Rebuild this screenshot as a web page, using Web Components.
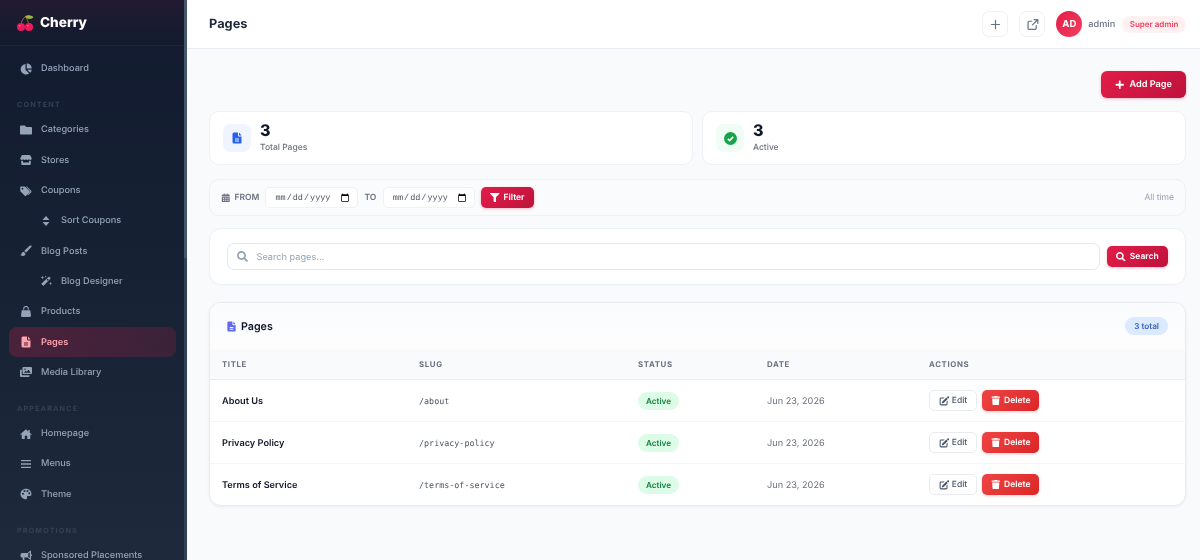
<!DOCTYPE html>
<html lang="en">
<head>
<meta charset="utf-8">
<title>Pages</title>
<style>
  html, body { margin: 0; height: 560px; overflow: hidden; background: #f8fafc; }
  body { font-family: Inter, "Liberation Sans", sans-serif; color: #0f172a; text-rendering: geometricPrecision; }
  app-shell { height: 560px; will-change: transform; }
</style>
</head>
<body>
<app-shell>
  <side-bar slot="side">
    <nav-item icon="pie">Dashboard</nav-item>
    <nav-label>CONTENT</nav-label>
    <nav-item icon="folder">Categories</nav-item>
    <nav-item icon="store">Stores</nav-item>
    <nav-item icon="tags">Coupons</nav-item>
    <nav-item icon="sort" sub>Sort Coupons</nav-item>
    <nav-item icon="brush">Blog Posts</nav-item>
    <nav-item icon="wand" sub>Blog Designer</nav-item>
    <nav-item icon="bag">Products</nav-item>
    <nav-item icon="file" active>Pages</nav-item>
    <nav-item icon="images">Media Library</nav-item>
    <nav-label>APPEARANCE</nav-label>
    <nav-item icon="home">Homepage</nav-item>
    <nav-item icon="bars">Menus</nav-item>
    <nav-item icon="palette">Theme</nav-item>
    <nav-label>PROMOTIONS</nav-label>
    <nav-item icon="bullhorn">Sponsored Placements</nav-item>
  </side-bar>
  <top-bar heading="Pages"></top-bar>
  <page-content>
    <div class="actions"><red-button icon="plus" size="lg">Add Page</red-button></div>
    <div class="stats">
      <stat-card icon="file" tone="blue" value="3">Total Pages</stat-card>
      <stat-card icon="check" tone="green" value="3">Active</stat-card>
    </div>
    <filter-bar></filter-bar>
    <search-card></search-card>
    <pages-table></pages-table>
  </page-content>
</app-shell>

<script>
const ICONS = {
  plus: ['0 0 448 512', 'M416 208H272V64c0-17.67-14.33-32-32-32h-32c-17.67 0-32 14.33-32 32v144H32c-17.67 0-32 14.33-32 32v32c0 17.67 14.33 32 32 32h144v144c0 17.67 14.33 32 32 32h32c17.67 0 32-14.33 32-32V304h144c17.67 0 32-14.33 32-32v-32c0-17.67-14.33-32-32-32z'],
  search: ['0 0 512 512', 'M505 442.7L405.3 343c-4.5-4.5-10.6-7-17-7H372c27.6-35.3 44-79.7 44-128C416 93.1 322.9 0 208 0S0 93.1 0 208s93.1 208 208 208c48.3 0 92.7-16.4 128-44v16.3c0 6.4 2.5 12.5 7 17l99.7 99.7c9.4 9.4 24.6 9.4 33.9 0l28.3-28.3c9.4-9.4 9.4-24.6.1-34zM208 336c-70.7 0-128-57.2-128-128 0-70.7 57.2-128 128-128 70.7 0 128 57.2 128 128 0 70.7-57.2 128-128 128z'],
  filter: ['0 0 512 512', 'M487.976 0H24.028C2.71 0-8.047 25.866 7.058 40.971L192 225.941V432c0 7.831 3.821 15.17 10.237 19.662l80 55.98C298.02 518.69 320 507.493 320 487.98V225.941l184.947-184.97C520.021 25.896 509.338 0 487.976 0z'],
  folder: ['0 0 512 512', 'M464 128H272l-64-64H48C21.49 64 0 85.49 0 112v288c0 26.51 21.49 48 48 48h416c26.51 0 48-21.49 48-48V176c0-26.51-21.49-48-48-48z'],
  trash: ['0 0 448 512', 'M432 32H312l-9.4-18.7A24 24 0 0 0 281.1 0H166.8a23.72 23.72 0 0 0-21.4 13.3L136 32H16A16 16 0 0 0 0 48v32a16 16 0 0 0 16 16h416a16 16 0 0 0 16-16V48a16 16 0 0 0-16-16zM53.2 467a48 48 0 0 0 47.9 45h245.8a48 48 0 0 0 47.9-45L416 128H32z'],
  file: ['0 0 24 24', 'M6 1h8v6a2 2 0 0 0 2 2h5v12a2 2 0 0 1-2 2H6a3 3 0 0 1-3-3V4a3 3 0 0 1 3-3zM16 1l5 6h-5zM8 13v2h8v-2zM8 17v2h8v-2z'],
  pie: ['0 0 24 24', 'M11 2v11.500l7.300 7.300A10.500 10.500 0 1 1 11 2zM13.500 .5A10.500 10.500 0 0 1 23.500 11h-10zM14.500 13.500H23.500a10.500 10.500 0 0 1-3.200 6z'],
  store: ['0 0 24 24', 'M4 2h16l3.500 6.500a3.300 3.300 0 0 1-3.300 3.500 3.300 3.300 0 0 1-2.700-1.500A3.200 3.200 0 0 1 14.700 12a3.200 3.200 0 0 1-2.700-1.500A3.200 3.200 0 0 1 9.300 12a3.200 3.200 0 0 1-2.800-1.500A3.300 3.300 0 0 1 3.800 12 3.300 3.300 0 0 1 .5 8.500zM2.500 13.500h3.500V17h12v-3.500h3.500V20a2 2 0 0 1-2 2H4.500a2 2 0 0 1-2-2z'],
  tags: ['0 0 24 24', 'M.5 4v7.500c0 .6.200 1.100.600 1.500l8.400 8.400c.8.800 2 .8 2.800 0l6.600-6.600c.8-.8.800-2 0-2.800L10.500 3.600A2 2 0 0 0 9 3H1.500a1 1 0 0 0-1 1zM5 9a1.700 1.700 0 1 1 0-3.400A1.700 1.700 0 0 1 5 9zM13.500 3l9 8.500c.8.800.8 2 0 2.800l-6 6-1-1 5.500-6.300-9.200-10z'],
  sort: ['0 0 24 24', 'M12 2l7 8H5zM12 22l-7-8h14z'],
  brush: ['0 0 24 24', 'M22.500 1.200c-1-.8-2.200-.3-3.200.5L9.500 10.500c-.5.500-.8 1-1 1.600l3.300 3c.6-.2 1.200-.6 1.600-1.100l9.200-9.800c.7-.9.800-2.200-.1-3zM7.300 13.500c-2.500.2-4 1.900-4.300 4-.2 1.400-1 2-2 2.300 1.300 1.700 3.500 2.400 5.500 2.200 3-.3 4.600-2.300 4.500-5z'],
  wand: ['0 0 24 24', 'M18 3l3.500 3.500L7 22l-4.500-4.500zM15.500 7.500l-2.200 2.200 2 2 2.200-2.200zM5 1.500l1 2.500 2.500 1L6 6 5 8.500 4 6 1.500 5 4 4zM21 14l.9 2.100 2.100.9-2.100.9L21 20l-.9-2.100L18 17l2.100-.9zM11.500 1l.7 1.300 1.300.7-1.300.7-.7 1.300-.7-1.300L9.500 3l1.300-.7z'],
  bag: ['0 0 24 24', 'M8.500 7.500V5.500a3.500 3.500 0 0 1 7 0v2h2.200v-2a5.700 5.700 0 0 0-11.400 0v2zM3.500 8.500h17l1.500 10.500a3 3 0 0 1-3 3H5a3 3 0 0 1-3-3z'],
  images: ['0 0 24 24', 'M7 2h15a2 2 0 0 1 2 2v10a2 2 0 0 1-2 2H7a2 2 0 0 1-2-2V4a2 2 0 0 1 2-2zM7.500 13.500h14l-4.500-6-3.500 4-2-2zM10 5a1.500 1.500 0 1 0 0 3 1.500 1.500 0 0 0 0-3zM3.500 7v9.500A2 2 0 0 0 5.500 18.500H19V20a2 2 0 0 1-2 2H2a2 2 0 0 1-2-2V9a2 2 0 0 1 2-2z'],
  home: ['0 0 24 24', 'M12 2.500 .5 12.500l1.300 1.500L3.500 12.600V21a1 1 0 0 0 1 1h5v-6.500h5V22h5a1 1 0 0 0 1-1v-8.400l1.700 1.400 1.300-1.500L19.500 9.500V4h-3v3z'],
  bars: ['0 0 24 24', 'M2 4h20v2.600H2zM2 10.700h20v2.600H2zM2 17.400h20V20H2z'],
  palette: ['0 0 24 24', 'M12 1.500C5.800 1.500 1 6.300 1 12s5 10.500 10.500 10.500c2.500 0 3.300-1.700 2.600-3.300-.8-1.800.2-3.200 2-3.200h3.400c2.200 0 3.500-1.700 3.500-4C23 6 18 1.500 12 1.500zM6 13.500a2 2 0 1 1 0-4 2 2 0 0 1 0 4zM9 8a2 2 0 1 1 0-4 2 2 0 0 1 0 4zM15 8a2 2 0 1 1 0-4 2 2 0 0 1 0 4zM18.500 12.500a2 2 0 1 1 0-4 2 2 0 0 1 0 4z'],
  bullhorn: ['0 0 24 24', 'M22 2a1 1 0 0 0-1.500-.5L15 6H4a3 3 0 0 0-3 3v3a3 3 0 0 0 3 3h1l1 7h3.500L8.500 15H15l5.500 4.500A1 1 0 0 0 22 19v-6.500a2 2 0 0 0 0-4zM19.500 4.700v11.600L16.500 14V7z'],
  calendar: ['0 0 24 24', 'M7 1h2.500v3h5V1H17v3h3a2 2 0 0 1 2 2v2H2V6a2 2 0 0 1 2-2h3zM2 9.500h20V21a2 2 0 0 1-2 2H4a2 2 0 0 1-2-2zM5 12v2.500h3V12zM10.500 12v2.500h3V12zM16 12v2.500h3V12zM5 17v2.500h3V17zM10.500 17v2.500h3V17zM16 17v2.500h3V17z'],
  edit: ['0 0 24 24', 'M20.300 1.300a2.400 2.400 0 0 1 3.400 0c.9.900.9 2.400 0 3.400l-1.500 1.500-3.400-3.400zM17.600 3.600 21 7 11 17l-4.500 1 1-4.500zM5 3.500h8.500L11 6H5a1 1 0 0 0-1 1v12a1 1 0 0 0 1 1h12a1 1 0 0 0 1-1v-6l2.500-2.500V19A3.500 3.500 0 0 1 17 22.500H5A3.500 3.500 0 0 1 1.500 19V7A3.500 3.500 0 0 1 5 3.500z']
};

class AppIcon extends HTMLElement {
  constructor() {
    super();
    this.attachShadow({ mode: 'open' });
    const name = this.getAttribute('name');
    const [box, d] = ICONS[name];
    this.shadowRoot.innerHTML = `
      <style>
        :host { display: inline-flex; align-items: center; justify-content: center; width: var(--s, 12px); height: var(--s, 12px); flex: none; }
        svg { width: 100%; height: 100%; fill: currentColor; display: block; }
      </style>
      <svg viewBox="${box}" aria-hidden="true"><path fill-rule="evenodd" d="${d}"/></svg>`;
  }
}

class AppShell extends HTMLElement {
  constructor() {
    super();
    this.attachShadow({ mode: 'open' });
    this.shadowRoot.innerHTML = `
      <style>
        :host { display: grid; grid-template-columns: 187px 1fr; grid-template-rows: 49px 1fr; width: 1200px; }
        .side { grid-row: 1 / 3; display: block; min-height: 0; }
      </style>
      <slot name="side" class="side"></slot>
      <slot></slot>`;
  }
}

class SideBar extends HTMLElement {
  constructor() {
    super();
    this.attachShadow({ mode: 'open' });
    this.shadowRoot.innerHTML = `
      <style>
        :host { display: block; height: 560px; overflow: hidden; position: relative; box-sizing: border-box; padding-right: 3px; color: #94a3b8;
          background: linear-gradient(180deg, rgba(225,29,72,.08) 0, rgba(225,29,72,0) 46px), linear-gradient(180deg, #111a2e 0%, #1e293b 100%); }
        .brand { display: flex; align-items: center; gap: 6px; padding: 1px 0 0 16px; box-sizing: border-box; height: 46px; border-bottom: 1px solid rgba(255,255,255,.05); font-size: 13.600px; font-weight: 800; color: #fff; }
        .brand svg { width: 18px; height: 18px; flex: none; }
        nav { padding-top: 7.500px; }
        .thumb { position: absolute; right: 0; top: 0; width: 3px; height: 258px; background: #475569; }
        .track { position: absolute; right: 0; top: 0; bottom: 0; width: 3px; background: #334155; }
      </style>
      <div class="brand">
        <svg viewBox="0 0 18 18">
          <path d="M5 11C5.500 7 7 4 9.500 2.500 11 5 12.500 8 13 11" fill="none" stroke="#b4622a" stroke-width="1"/>
          <path d="M9 2.500C11 .5 15 1 17.500 3 16 5.500 11.500 6 9 2.500z" fill="#9ab83c"/>
          <circle cx="5" cy="13" r="4" fill="#ec1b5e"/><circle cx="13" cy="13" r="4" fill="#ec1b5e"/>
          <circle cx="3.800" cy="11.800" r=".8" fill="#ff7aa2"/><circle cx="11.800" cy="11.800" r=".8" fill="#ff7aa2"/>
        </svg>
        <span>Cherry</span>
      </div>
      <nav><slot></slot></nav>
      <div class="track"></div><div class="thumb"></div>`;
  }
}

class NavItem extends HTMLElement {
  constructor() {
    super();
    this.attachShadow({ mode: 'open' });
    const icon = this.getAttribute('icon');
    this.shadowRoot.innerHTML = `
      <style>
        :host { display: flex; align-items: center; gap: 9px; height: 30.300px; box-sizing: border-box; margin: 0 8px 0 9px; padding-left: 11px; border-radius: 8px; font-size: 9.200px; font-weight: 500; color: #94a3b8; white-space: nowrap; }
        :host([sub]) { padding-left: 31px; }
        :host([active]) { color: #fda4af; font-weight: 600; background: linear-gradient(135deg, rgba(225,29,72,.26), rgba(225,29,72,.16)); }
        app-icon { --s: 12px; }
      </style>
      <app-icon name="${icon}"></app-icon><span><slot></slot></span>`;
  }
}

class NavLabel extends HTMLElement {
  constructor() {
    super();
    this.attachShadow({ mode: 'open' });
    this.shadowRoot.innerHTML = `
      <style>
        :host { display: block; padding: 15.500px 0 4.500px 17px; height: 11px; line-height: 11px; font-size: 7.200px; font-weight: 700; letter-spacing: 1.150px; color: #334155; }
      </style>
      <slot></slot>`;
  }
}

class TopBar extends HTMLElement {
  constructor() {
    super();
    this.attachShadow({ mode: 'open' });
    this.shadowRoot.innerHTML = `
      <style>
        :host { display: flex; align-items: center; height: 49px; box-sizing: border-box; padding: 0 14px 0 22px; background: #fff; border-bottom: 1px solid #e9edf3; }
        h1 { margin: 0; padding-top: 1px; font-size: 12.800px; font-weight: 700; color: #1e293b; flex: 1; }
        .btn { width: 26px; height: 26px; box-sizing: border-box; border: 1px solid #eef1f5; border-radius: 7px; display: flex; align-items: center; justify-content: center; color: #64748b; background: #fff; margin-right: 11px; }
        .btn svg { width: 13px; height: 13px; fill: none; stroke: currentColor; stroke-width: 1.500; stroke-linecap: round; stroke-linejoin: round; }
        .avatar { width: 26px; height: 26px; border-radius: 50%; background: linear-gradient(135deg, #e11d48, #f43f5e); color: #fff; font-size: 9.600px; font-weight: 700; display: flex; align-items: center; justify-content: center; }
        .name { font-size: 9.200px; font-weight: 500; color: #6b7280; margin: 0 7px 0 6px; }
        .role { font-size: 8px; font-weight: 600; color: #f43f5e; background: #fff1f2; border-radius: 99px; padding: 0 7.500px; height: 17px; line-height: 17px; }
      </style>
      <h1>${this.getAttribute('heading')}</h1>
      <span class="btn"><svg viewBox="0 0 16 16"><path d="M8 3v10M3 8h10"/></svg></span>
      <span class="btn"><svg viewBox="0 0 16 16"><path d="M12.500 9.500v3a1.500 1.500 0 0 1-1.500 1.500H4a1.500 1.500 0 0 1-1.500-1.500V5.500A1.500 1.500 0 0 1 4 4h3M10 2h4.500v4.500M14 2.500 8 8.500"/></svg></span>
      <span class="avatar">AD</span>
      <span class="name">admin</span>
      <span class="role">Super admin</span>`;
  }
}

class PageContent extends HTMLElement {
  constructor() {
    super();
    this.attachShadow({ mode: 'open' });
    this.shadowRoot.innerHTML = `
      <style>
        :host { display: flex; flex-direction: column; padding: 22px 14px 0 22px; background: #f8fafc; }
        ::slotted(.actions) { display: flex; justify-content: flex-end; margin-bottom: 13px; }
        ::slotted(.stats) { display: grid; grid-template-columns: 1fr 1fr; gap: 9px; margin-bottom: 14px; }
      </style>
      <slot></slot>`;
  }
}

class RedButton extends HTMLElement {
  constructor() {
    super();
    this.attachShadow({ mode: 'open' });
    this.shadowRoot.innerHTML = `
      <style>
        :host { display: inline-flex; align-items: center; justify-content: center; gap: 4px; height: 21px; padding: 0 7px; box-sizing: border-box; border-radius: 5px; font-size: 8.500px; font-weight: 600; color: #fff; white-space: nowrap;
          background: linear-gradient(135deg, #e11d48, #be123c); box-shadow: 0 1px 3px rgba(225,29,72,.3); }
        :host([size=lg]) { height: 27px; width: 85px; padding: 0; font-size: 9.200px; gap: 5px; border-radius: 6px; }
        :host([tone=danger]) { background: linear-gradient(135deg, #ef4444, #dc2626); box-shadow: 0 1px 3px rgba(239,68,68,.3); height: 21px; width: 58px; padding: 0; }
        app-icon { --s: 9.500px; }
      </style>
      <app-icon name="${this.getAttribute('icon')}"></app-icon><span><slot></slot></span>`;
  }
}

class StatCard extends HTMLElement {
  constructor() {
    super();
    this.attachShadow({ mode: 'open' });
    const tone = this.getAttribute('tone');
    const glyph = tone === 'green'
      ? `<svg viewBox="0 0 24 24" width="13" height="13"><circle cx="12" cy="12" r="12" fill="#16a34a"/><path d="M7 12.500l3.300 3.200L17 9" fill="none" stroke="#fff" stroke-width="3" /></svg>`
      : `<app-icon name="file"></app-icon>`;
    this.shadowRoot.innerHTML = `
      <style>
        :host { display: flex; align-items: center; gap: 9px; height: 54px; box-sizing: border-box; padding-left: 13px; background: #fff; border: 1px solid #eef1f5; border-radius: 10px; }
        .ic { width: 28px; height: 28px; border-radius: 8px; display: flex; align-items: center; justify-content: center; background: #eff4ff; color: #2563eb; }
        :host([tone=green]) .ic { background: #f0fdf4; }
        .val { font-size: 16px; font-weight: 800; line-height: 18px; color: #0f172a; }
        .lab { font-size: 8.500px; font-weight: 500; line-height: 13px; color: #6b7280; margin-top: 3px; }
      </style>
      <div class="ic">${glyph}</div>
      <div><div class="val">${this.getAttribute('value')}</div><div class="lab"><slot></slot></div></div>`;
  }
}

class FilterBar extends HTMLElement {
  constructor() {
    super();
    this.attachShadow({ mode: 'open' });
    this.shadowRoot.innerHTML = `
      <style>
        :host { display: flex; align-items: center; height: 37px; box-sizing: border-box; padding: 0 11px 0 11px; background: #f9fbfc; border: 1px solid #eef1f5; border-radius: 10px; margin-bottom: 12px; font-size: 8.500px; font-weight: 600; color: #6b7280; }
        app-icon { --s: 9.500px; margin-right: 4px; }
        label { margin-right: 6px; }
        input { font: 400 8.500px "Liberation Mono", monospace; width: 93px; height: 21px; box-sizing: border-box; padding: 0 7px 0 8px; border: 1px solid #eef1f5; border-radius: 5px; background: #fff; color: #4b5563; margin: 0; text-rendering: geometricPrecision; }
        input.second { width: 92px; }
        input::-webkit-calendar-picker-indicator { margin: 0; padding: 0; width: 10px; height: 10px; }
        .to { margin: 0 6.500px 0 6px; }
        red-button { margin-left: 6px; width: 53px; padding: 0; }
        .range { margin-left: auto; font-weight: 400; color: #94a3b8; }
      </style>
      <app-icon name="calendar"></app-icon><label>FROM</label>
      <input type="date" aria-label="From">
      <label class="to">TO</label>
      <input class="second" type="date" aria-label="To">
      <red-button icon="filter">Filter</red-button>
      <span class="range">All time</span>`;
  }
}

class SearchCard extends HTMLElement {
  constructor() {
    super();
    this.attachShadow({ mode: 'open' });
    this.shadowRoot.innerHTML = `
      <style>
        :host { display: flex; align-items: center; gap: 7px; height: 57px; box-sizing: border-box; padding: 0 17px; background: #fff; border: 1px solid #eef1f5; border-radius: 12px; margin-bottom: 17px; box-shadow: 0 1px 2px rgba(15,23,42,.02); }
        .field { flex: 1; height: 27px; box-sizing: border-box; display: flex; align-items: center; gap: 8.500px; padding-left: 9px; border: 1px solid #e2e8f0; border-radius: 7px; color: #94a3b8; }
        app-icon { --s: 11px; }
        input { flex: 1; border: 0; outline: 0; background: none; font: 400 9.200px Inter, sans-serif; color: #334155; padding: 1px 0 0; text-rendering: geometricPrecision; }
        input::placeholder { color: #94a3b8; opacity: 1; }
        red-button { width: 61px; padding: 0; }
      </style>
      <div class="field"><app-icon name="search"></app-icon><input placeholder="Search pages..." aria-label="Search pages"></div>
      <red-button icon="search">Search</red-button>`;
  }
}

class StatusBadge extends HTMLElement {
  constructor() {
    super();
    this.attachShadow({ mode: 'open' });
    this.shadowRoot.innerHTML = `
      <style>
        :host { display: inline-block; height: 18px; width: 41px; text-align: center; line-height: 18px; border-radius: 99px; background: #dcfce7; color: #15803d; font-size: 8.200px; font-weight: 600; }
      </style>
      <slot></slot>`;
  }
}

class EditButton extends HTMLElement {
  constructor() {
    super();
    this.attachShadow({ mode: 'open' });
    this.shadowRoot.innerHTML = `
      <style>
        :host { display: inline-flex; align-items: center; justify-content: center; gap: 3px; width: 49px; height: 21px; box-sizing: border-box; border: 1px solid #e8ecf1; border-radius: 5px; background: #fff; color: #475569; font-size: 8.500px; font-weight: 500; }
        app-icon { --s: 10px; }
      </style>
      <app-icon name="edit"></app-icon><span><slot></slot></span>`;
  }
}

class PagesTable extends HTMLElement {
  constructor() {
    super();
    this.attachShadow({ mode: 'open' });
    const rows = [
      ['About Us', '/about'],
      ['Privacy Policy', '/privacy-policy'],
      ['Terms of Service', '/terms-of-service']
    ];
    this.shadowRoot.innerHTML = `
      <style>
        :host { display: block; background: #fff; border: 1px solid #e8ecf1; border-radius: 12px; overflow: hidden; box-shadow: 0 1px 3px rgba(15,23,42,.06); }
        header { display: flex; align-items: center; justify-content: space-between; height: 46px; padding: 0 17px 0 16px; background: linear-gradient(180deg, #f9fbfc, #fdfdfe); }
        h2 { margin: 0; display: flex; align-items: center; gap: 4px; font-size: 10.700px; font-weight: 600; color: #0f172a; }
        h2 app-icon { --s: 11px; color: #6366f1; }
        .count { height: 18px; line-height: 18px; padding: 0 9px; border-radius: 99px; background: #dbeafe; color: #3b5fc4; font-size: 8.200px; font-weight: 600; }
        table { width: 100%; border-collapse: collapse; table-layout: fixed; }
        th { height: 30px; padding: 0 0 0 12px; text-align: left; font-size: 7.800px; font-weight: 700; letter-spacing: .65px; color: #6b7280; background: #f8fafc; border-bottom: 1px solid #e8edf3; }
        td { height: 41px; padding: 0 0 0 12px; font-size: 9.200px; color: #6b7280; border-bottom: 1px solid #f3f5f8; }
        tr:last-child td { border-bottom: 0; }
        .title { font-weight: 600; color: #0f172a; }
        .title, .date { height: 40px; padding-top: 1px; }
        .slug { font: 400 8.400px "DejaVu Sans Mono", "Liberation Mono", monospace; color: #4b5563; }
        .act { display: flex; align-items: center; gap: 5px; }
        edit-button { width: 48px; }
        red-button { width: 57px; }
      </style>
      <header>
        <h2><app-icon name="file"></app-icon>Pages</h2>
        <span class="count">3 total</span>
      </header>
      <table>
        <colgroup><col style="width:197px"><col style="width:219px"><col style="width:129px"><col style="width:162px"><col></colgroup>
        <thead><tr><th>TITLE</th><th>SLUG</th><th>STATUS</th><th>DATE</th><th>ACTIONS</th></tr></thead>
        <tbody>${rows.map(r => `
          <tr>
            <td class="title">${r[0]}</td>
            <td class="slug">${r[1]}</td>
            <td><status-badge>Active</status-badge></td>
            <td class="date">Jun 23, 2026</td>
            <td><div class="act"><edit-button>Edit</edit-button><red-button icon="trash" tone="danger">Delete</red-button></div></td>
          </tr>`).join('')}
        </tbody>
      </table>`;
  }
}

customElements.define('app-icon', AppIcon);
customElements.define('app-shell', AppShell);
customElements.define('side-bar', SideBar);
customElements.define('nav-item', NavItem);
customElements.define('nav-label', NavLabel);
customElements.define('top-bar', TopBar);
customElements.define('page-content', PageContent);
customElements.define('red-button', RedButton);
customElements.define('stat-card', StatCard);
customElements.define('filter-bar', FilterBar);
customElements.define('search-card', SearchCard);
customElements.define('status-badge', StatusBadge);
customElements.define('edit-button', EditButton);
customElements.define('pages-table', PagesTable);
</script>
</body>
</html>
